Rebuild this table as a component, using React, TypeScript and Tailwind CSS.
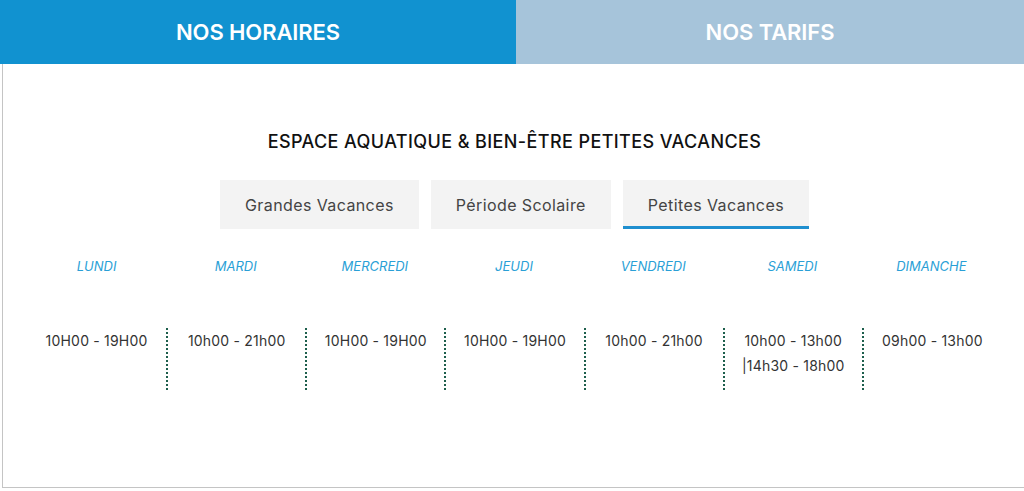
const days = [
  { name: 'LUNDI', hours: ['10H00 - 19H00'] },
  { name: 'MARDI', hours: ['10h00 - 21h00'] },
  { name: 'MERCREDI', hours: ['10H00 - 19H00'] },
  { name: 'JEUDI', hours: ['10H00 - 19H00'] },
  { name: 'VENDREDI', hours: ['10h00 - 21h00'] },
  { name: 'SAMEDI', hours: ['10h00 - 13h00', '|14h30 - 18h00'] },
  { name: 'DIMANCHE', hours: ['09h00 - 13h00'] },
];

const periods = ['Grandes Vacances', 'Période Scolaire', 'Petites Vacances'];

export default function App() {
  return (
    <div className="w-[1024px] h-[491px] bg-white overflow-hidden font-['Inter',sans-serif]">
      {/* Top tabs */}
      <div className="flex h-16">
        <div className="w-[516px] bg-[#1192d0] flex items-center justify-center">
          <span className="text-white text-[22px] font-semibold tracking-[-0.1px]">NOS HORAIRES</span>
        </div>
        <div className="flex-1 bg-[#a6c4da] flex items-center justify-center">
          <span className="text-white text-[22px] font-semibold tracking-[-0.1px]">NOS TARIFS</span>
        </div>
      </div>

      <div className="ml-[2px] w-[1030px] h-[424px] border-l border-b border-[#c4c4c4] pt-16">
        <h2 className="text-center text-[18px] leading-7 font-medium tracking-[0.4px] text-[#111] pr-[6px]">
          ESPACE AQUATIQUE &amp; BIEN-ÊTRE PETITES VACANCES
        </h2>

        {/* Period tabs */}
        <div className="flex justify-center gap-3 mt-6 pr-[6px]">
          {periods.map((p, i) => (
            <div
              key={p}
              className={
                'h-[49px] px-[25px] bg-[#f3f3f3] flex items-center text-[16px] tracking-[0.4px] text-[#444] ' +
                (i === 2 ? 'border-b-[3px] border-[#1f8fcf] pt-[3px]' : '')
              }
            >
              {p}
            </div>
          ))}
        </div>

        {/* Days */}
        <div className="grid grid-cols-7 w-[974px] ml-[24px] mt-[27px]">
          {days.map((d) => (
            <div key={d.name} className="text-center text-[13px] leading-5 italic text-[#2a9fd6]">
              {d.name}
            </div>
          ))}
        </div>
        <div className="grid grid-cols-7 w-[974px] ml-[24px] mt-[52px]">
          {days.map((d, i) => (
            <div
              key={d.name}
              className={
                'h-[62px] text-center text-[14px] leading-[25px] tracking-[0.2px] text-[#333] ' +
                (i > 0 ? 'border-l-2 border-dotted border-[#1d5e4c]' : '')
              }
            >
              {d.hours.map((h) => (
                <div key={h}>{h}</div>
              ))}
            </div>
          ))}
        </div>
      </div>
    </div>
  );
}
